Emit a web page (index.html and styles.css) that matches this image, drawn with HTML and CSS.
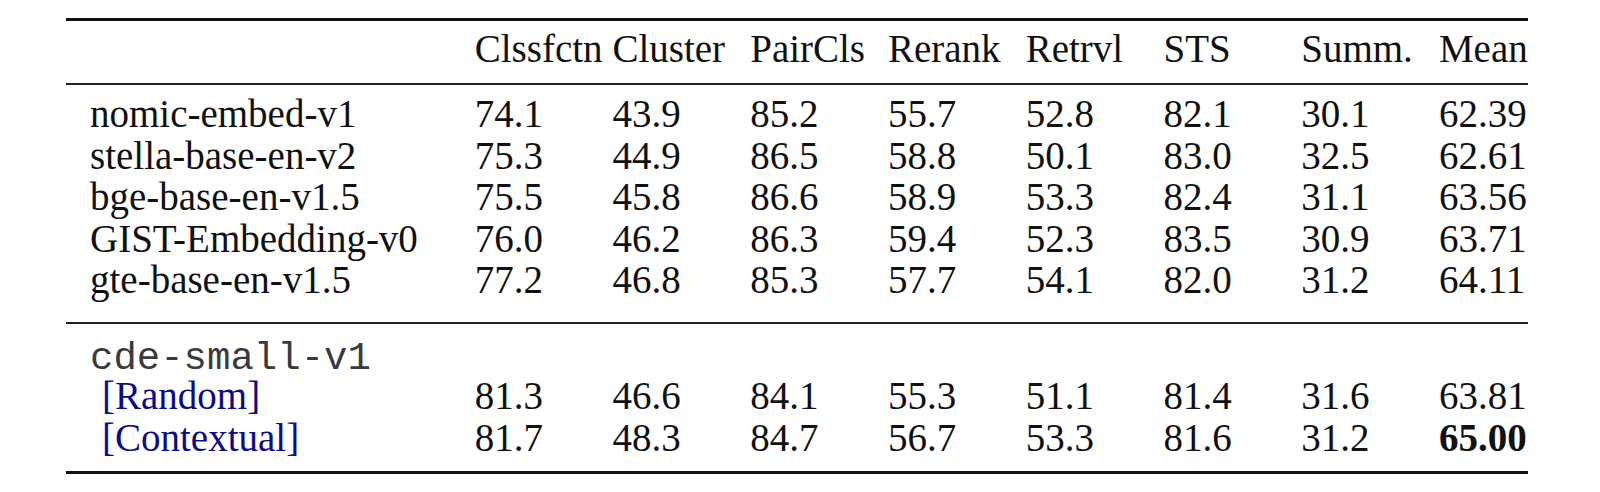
FILE: index.html
```html
<!DOCTYPE html>
<html lang="en">

<head>
    <meta charset="UTF-8">
    <meta name="viewport" content="width=device-width, initial-scale=1.0">
    <title>MTEB Results</title>
    <link rel="stylesheet" href="styles.css">
</head>

<body>
    <table class="results">
        <colgroup>
            <col class="col-name">
            <col class="col-score"><col class="col-score"><col class="col-score"><col class="col-score">
            <col class="col-score"><col class="col-score"><col class="col-score">
            <col class="col-mean">
        </colgroup>
        <thead>
            <tr>
                <th></th>
                <th>Clssfctn</th>
                <th>Cluster</th>
                <th>PairCls</th>
                <th>Rerank</th>
                <th>Retrvl</th>
                <th>STS</th>
                <th>Summ.</th>
                <th>Mean</th>
            </tr>
        </thead>
        <tbody class="baselines">
            <tr>
                <td>nomic-embed-v1</td>
                <td>74.1</td><td>43.9</td><td>85.2</td><td>55.7</td><td>52.8</td><td>82.1</td><td>30.1</td><td>62.39</td>
            </tr>
            <tr>
                <td>stella-base-en-v2</td>
                <td>75.3</td><td>44.9</td><td>86.5</td><td>58.8</td><td>50.1</td><td>83.0</td><td>32.5</td><td>62.61</td>
            </tr>
            <tr>
                <td>bge-base-en-v1.5</td>
                <td>75.5</td><td>45.8</td><td>86.6</td><td>58.9</td><td>53.3</td><td>82.4</td><td>31.1</td><td>63.56</td>
            </tr>
            <tr>
                <td>GIST-Embedding-v0</td>
                <td>76.0</td><td>46.2</td><td>86.3</td><td>59.4</td><td>52.3</td><td>83.5</td><td>30.9</td><td>63.71</td>
            </tr>
            <tr>
                <td>gte-base-en-v1.5</td>
                <td>77.2</td><td>46.8</td><td>85.3</td><td>57.7</td><td>54.1</td><td>82.0</td><td>31.2</td><td>64.11</td>
            </tr>
        </tbody>
        <tbody class="ours">
            <tr class="model-row">
                <td class="mono">cde-small-v1</td>
                <td></td><td></td><td></td><td></td><td></td><td></td><td></td><td></td>
            </tr>
            <tr>
                <td class="variant">[Random]</td>
                <td>81.3</td><td>46.6</td><td>84.1</td><td>55.3</td><td>51.1</td><td>81.4</td><td>31.6</td><td>63.81</td>
            </tr>
            <tr>
                <td class="variant">[Contextual]</td>
                <td>81.7</td><td>48.3</td><td>84.7</td><td>56.7</td><td>53.3</td><td>81.6</td><td>31.2</td><td><b>65.00</b></td>
            </tr>
        </tbody>
    </table>
</body>

</html>
```

FILE: styles.css
```css
body {
    margin: 0;
    background-color: #ffffff;
    font-family: "Liberation Serif", "Times New Roman", serif;
    color: #111111;
}

.results {
    margin: 18px 0 0 66px;
    width: 1462px;
    table-layout: fixed;
    border-collapse: collapse;
    font-size: 39px;
    line-height: 41.4px;
}

.col-name {
    width: 408.5px;
}

.col-score {
    width: 137.7px;
}

.col-mean {
    width: 89px;
}

th,
td {
    padding: 0;
    text-align: left;
    font-weight: normal;
    white-space: nowrap;
}

td:first-child {
    padding-left: 24px;
}

thead th {
    border-top: 3px solid #111111;
    border-bottom: 2px solid #222222;
    padding-top: 7px;
    padding-bottom: 13.5px;
}

.baselines tr:first-child td {
    padding-top: 8.5px;
}

.baselines tr:last-child td {
    padding-bottom: 22px;
}

.ours tr:first-child td {
    border-top: 2px solid #222222;
    padding-top: 19px;
}

.ours .model-row td {
    line-height: 32px;
}

.ours tr:last-child td {
    border-bottom: 3px solid #111111;
    padding-bottom: 13px;
}

.mono {
    font-family: "Liberation Mono", "Courier New", monospace;
    font-size: 39px;
    color: #3a3a3a;
}

td.variant {
    padding-left: 36px;
    color: #0b0b8a;
}

b {
    font-weight: bold;
}
```
